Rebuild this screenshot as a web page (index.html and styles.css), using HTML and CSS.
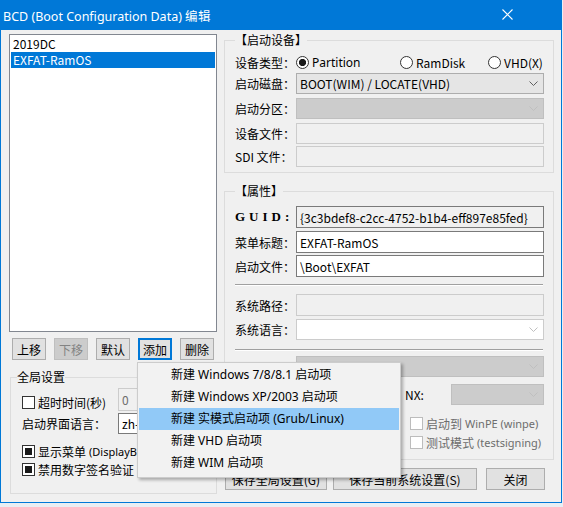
FILE: index.html
```html
<!DOCTYPE html>
<html lang="zh-CN">
<head>
<meta charset="utf-8">
<title>BCD 编辑</title>
<link rel="stylesheet" href="styles.css">
</head>
<body>
<div class="window">
  <div class="titlebar">
    <span class="title">BCD (Boot Configuration Data) 编辑</span>
    <svg class="close" width="11" height="11" viewBox="0 0 11 11"><path d="M0.5 0.5L10.5 10.5M10.5 0.5L0.5 10.5" stroke="#fff" stroke-width="1.1" fill="none"/></svg>
  </div>
  <div class="client">
    <div class="leftcol">
      <div class="listbox">
        <div class="li">2019DC</div>
        <div class="li sel">EXFAT-RamOS</div>
      </div>
      <div class="btnrow">
        <span class="btn sm">上移</span>
        <span class="btn sm disabled">下移</span>
        <span class="btn sm">默认</span>
        <span class="btn sm focus">添加</span>
        <span class="btn sm">删除</span>
      </div>
      <fieldset class="group global">
        <legend>全局设置</legend>
        <div class="grow g1">
          <span class="chk glw"><i class="box"></i>超时时间(秒)</span>
          <span class="tb dis gfield">0</span>
        </div>
        <div class="grow g2">
          <span class="glw">启动界面语言：</span>
          <span class="combo edit gfield"><span class="ctext">zh-CN</span></span>
        </div>
        <div class="grow g3"><span class="chk"><i class="box on"></i>显示菜单 <span class="en">(DisplayBootMenu)</span></span></div>
        <div class="grow g4"><span class="chk"><i class="box on"></i>禁用数字签名验证</span></div>
      </fieldset>
    </div>

    <div class="rightcol">
      <fieldset class="group g-dev">
        <legend>【启动设备】</legend>
        <div class="frow r1">
          <span class="lbl">设备类型：</span>
          <span class="radio w1"><i class="dot on"></i><span class="en2">Partition</span></span>
          <span class="radio w2"><i class="dot"></i>RamDisk</span>
          <span class="radio"><i class="dot"></i>VHD(X)</span>
        </div>
        <div class="frow r2">
          <span class="lbl">启动磁盘：</span>
          <span class="combo drop"><span class="ctext">BOOT(WIM) / LOCATE(VHD)</span><svg class="arr" width="9" height="5" viewBox="0 0 9 5"><path d="M0.5 0.5L4.5 4.5L8.5 0.5" stroke="#606060" fill="none"/></svg></span>
        </div>
        <div class="frow r3">
          <span class="lbl">启动分区：</span>
          <span class="combo drop dis"><span class="ctext"></span><svg class="arr" width="9" height="5" viewBox="0 0 9 5"><path d="M0.5 0.5L4.5 4.5L8.5 0.5" stroke="#bfbfbf" fill="none"/></svg></span>
        </div>
        <div class="frow r4">
          <span class="lbl">设备文件：</span>
          <span class="tb dis"></span>
        </div>
        <div class="frow r5">
          <span class="lbl">SDI 文件：</span>
          <span class="tb dis"></span>
        </div>
      </fieldset>

      <fieldset class="group g-prop">
        <legend>【属性】</legend>
        <div class="frow p1">
          <span class="lbl guid">GUID:</span>
          <span class="tb ro">{3c3bdef8-c2cc-4752-b1b4-eff897e85fed}</span>
        </div>
        <div class="frow p2">
          <span class="lbl">菜单标题：</span>
          <span class="tb">EXFAT-RamOS</span>
        </div>
        <div class="frow p3">
          <span class="lbl">启动文件：</span>
          <span class="tb">\Boot\EXFAT</span>
        </div>
        <div class="sep s1"></div>
        <div class="frow p4">
          <span class="lbl">系统路径：</span>
          <span class="tb dis"></span>
        </div>
        <div class="frow p5">
          <span class="lbl">系统语言：</span>
          <span class="combo edit dis"><span class="ctext"></span><svg class="arr" width="9" height="5" viewBox="0 0 9 5"><path d="M0.5 0.5L4.5 4.5L8.5 0.5" stroke="#bfbfbf" fill="none"/></svg></span>
        </div>
        <div class="sep s2"></div>
        <div class="frow p6">
          <span class="lbl"></span>
          <span class="combo drop dis"><span class="ctext"></span><svg class="arr" width="9" height="5" viewBox="0 0 9 5"><path d="M0.5 0.5L4.5 4.5L8.5 0.5" stroke="#bfbfbf" fill="none"/></svg></span>
        </div>
        <div class="frow p7">
          <span class="nxlbl">NX:</span>
          <span class="combo drop dis nx"><span class="ctext"></span><svg class="arr" width="9" height="5" viewBox="0 0 9 5"><path d="M0.5 0.5L4.5 4.5L8.5 0.5" stroke="#bfbfbf" fill="none"/></svg></span>
        </div>
        <div class="crow c1"><span class="chk gray"><i class="box dbox"></i>启动到 <span class="en">WinPE (winpe)</span></span></div>
        <div class="crow c2"><span class="chk gray"><i class="box dbox"></i>测试模式 <span class="en">(testsigning)</span></span></div>
      </fieldset>

      <div class="bottombtns">
        <span class="btn b1">保存全局设置(G)</span>
        <span class="btn b2">保存当前系统设置(S)</span>
        <span class="btn b3">关闭</span>
      </div>
    </div>
  </div>
</div>

<div class="menu">
  <div class="mi">新建 Windows 7/8/8.1 启动项</div>
  <div class="mi">新建 Windows XP/2003 启动项</div>
  <div class="mi hl">新建 实模式启动项 (Grub/Linux)</div>
  <div class="mi">新建 VHD 启动项</div>
  <div class="mi">新建 WIM 启动项</div>
</div>
</body>
</html>
```

FILE: styles.css
```css
* { box-sizing: border-box; }
html, body { margin: 0; padding: 0; }
body {
  position: relative;
  width: 563px;
  height: 507px;
  overflow: hidden;
  background: #e9eef3;
  font-family: "Noto Sans CJK SC", sans-serif;
  font-size: 12px;
  color: #000;
}
.window {
  width: 562px;
  height: 503px;
  background: #f0f0f0;
  border: 1px solid #0078d7;
  border-top: 0;
  display: flex;
  flex-direction: column;
}
.titlebar {
  height: 30px;
  flex: none;
  background: #0078d7;
  color: #fff;
  display: flex;
  align-items: center;
  justify-content: space-between;
  padding: 0 49px 0 3px;
  margin: 0 -1px;
}
.title { font-family: "Noto Sans", sans-serif; font-size: 12.5px; }
.close { display: block; margin-top: -2px; }

.client {
  display: flex;
  padding: 2px 7px 0 8px;
  gap: 7px;
}
.leftcol { width: 208px; flex: none; }
.rightcol { width: 330px; flex: none; }

.listbox {
  margin-top: 2px;
  height: 298px;
  border: 1px solid #828790;
  background: #fff;
  padding: 1px;
}
.li { height: 16px; line-height: 16px; padding-left: 2px; white-space: nowrap; }
.li.sel { background: #0078d7; color: #fff; }

.btn {
  display: flex;
  align-items: center;
  justify-content: center;
  height: 22px;
  border: 1px solid #adadad;
  background: #e1e1e1;
  white-space: nowrap;
}
.btn.disabled { background: #cccccc; border-color: #bfbfbf; color: #838383; }
.btn.focus { border: 2px solid #0078d7; }
.btnrow {
  display: flex;
  gap: 8px;
  margin-top: 6px;
  padding-left: 3px;
}
.btn.sm { width: 34px; }

fieldset.group {
  margin: 0;
  padding: 0;
  border: 1px solid #dcdcdc;
  min-width: 0;
}
fieldset.group legend {
  padding: 0;
  height: 16px;
  line-height: 16px;
  font-size: 12px;
}

.global {
  margin: 9px 0 0 1px !important;
  width: 207px;
  height: 125px;
  padding-left: 11px !important;
}
.global legend { margin-left: -5px; }
.grow { display: flex; align-items: center; }
.glw { width: 96px; flex: none; white-space: nowrap; }
.g1 { margin-top: 3px; height: 23px; }
.g1 .chk { margin-top: 6px; }
.g2 { margin-top: 2px; height: 21px; }
.g3 { margin-top: 9px; height: 17px; }
.g4 { margin-top: 1px; height: 17px; }
.gfield { width: 100px; height: 100%; }

.chk { display: flex; align-items: center; white-space: nowrap; }
.box {
  width: 13px;
  height: 13px;
  border: 1px solid #333;
  background: #fff;
  margin-right: 3px;
  flex: none;
}
.box.on { background: #1a1a1a; box-shadow: inset 0 0 0 2px #fff; }
.box.dbox { border-color: #bcbcbc; }
.chk.gray { color: #6d6d6d; }
.en { font-family: "Noto Sans", sans-serif; font-size: 11px; margin-left: 3px; }
.en2 { font-family: "Noto Sans", sans-serif; font-size: 12px; }

.tb {
  display: flex;
  align-items: center;
  flex: 1;
  height: 100%;
  border: 1px solid #7a7a7a;
  background: #fff;
  padding-left: 3px;
  white-space: nowrap;
  overflow: hidden;
}
.tb.dis { border-color: #cccccc; background: #f0f0f0; color: #6d6d6d; }
.tb.ro { background: #f0f0f0; }

.combo {
  display: flex;
  align-items: center;
  justify-content: space-between;
  flex: 1;
  height: 100%;
  border: 1px solid #adadad;
  background: #e5e5e5;
  padding: 0 5px 0 3px;
  white-space: nowrap;
  overflow: hidden;
}
.combo.edit { background: #fff; border-color: #7a7a7a; }
.combo.dis { background: #cccccc; border-color: #bfbfbf; }
.combo.edit.dis { background: #fff; border-color: #cccccc; }
.arr { display: block; flex: none; }

.g-dev { margin-top: 0 !important; padding: 0 9px 5px 10px !important; }
.g-dev legend { margin-left: 0; }
.frow { display: flex; align-items: center; }
.lbl { width: 61px; flex: none; white-space: nowrap; }
.radio { display: flex; align-items: center; white-space: nowrap; }
.radio.w1 { width: 104px; }
.radio.w2 { width: 88px; }
.dot {
  width: 13px;
  height: 13px;
  border-radius: 50%;
  border: 1px solid #333;
  background: #fff;
  margin-right: 3px;
  flex: none;
}
.dot.on { background: radial-gradient(circle, #1a1a1a 0 3.3px, #fff 3.9px); }
.r1 { margin-top: 4px; height: 20px; }
.r2 { margin-top: 1px; height: 21px; }
.r3 { margin-top: 4px; height: 21px; }
.r4 { margin-top: 4px; height: 21px; }
.r5 { margin-top: 2px; height: 21px; }

.g-prop { margin-top: 10px !important; padding: 0 9px 9px 10px !important; }
.g-prop legend { margin-left: 0; }
.guid {
  font-family: "Liberation Serif", serif;
  font-weight: bold;
  font-size: 13px;
  letter-spacing: 4px;
}
.p1 { margin-top: 7px; height: 22px; }
.p2 { margin-top: 3px; height: 22px; }
.p3 { margin-top: 2px; height: 22px; }
.sep { height: 2px; border-top: 1px solid #a0a0a0; border-bottom: 1px solid #fff; margin-right: 1px; }
.s1 { margin-top: 7px; }
.p4 { margin-top: 8px; height: 22px; }
.p5 { margin-top: 3px; height: 21px; }
.s2 { margin-top: 9px; }
.p6 { margin-top: 5px; height: 21px; }
.p7 { margin-top: 7px; height: 21px; justify-content: flex-end; }
.nxlbl { width: 46px; flex: none; }
.combo.nx { flex: none; width: 93px; }
.crow { display: flex; align-items: center; height: 16px; padding-left: 175px; }
.c1 { margin-top: 10px; }
.c2 { margin-top: 3px; }

.bottombtns { display: flex; margin-top: 8px; }
.b1 { width: 102px; margin-left: 1px; }
.b2 { width: 144px; margin-left: 6px; }
.b3 { width: 59px; margin-left: 9px; }

.menu {
  position: absolute;
  left: 137px;
  top: 362px;
  width: 264px;
  height: 116px;
  background: #f2f2f2;
  border: 1px solid #cccccc;
  padding: 1px;
  box-shadow: 2px 2px 3px rgba(0, 0, 0, 0.3);
  font-family: "Noto Sans", "Noto Sans CJK SC", sans-serif;
  font-size: 12px;
}
.mi { height: 22px; line-height: 22px; padding-left: 32px; white-space: nowrap; }
.mi.hl { background: #91c9f7; }
```
